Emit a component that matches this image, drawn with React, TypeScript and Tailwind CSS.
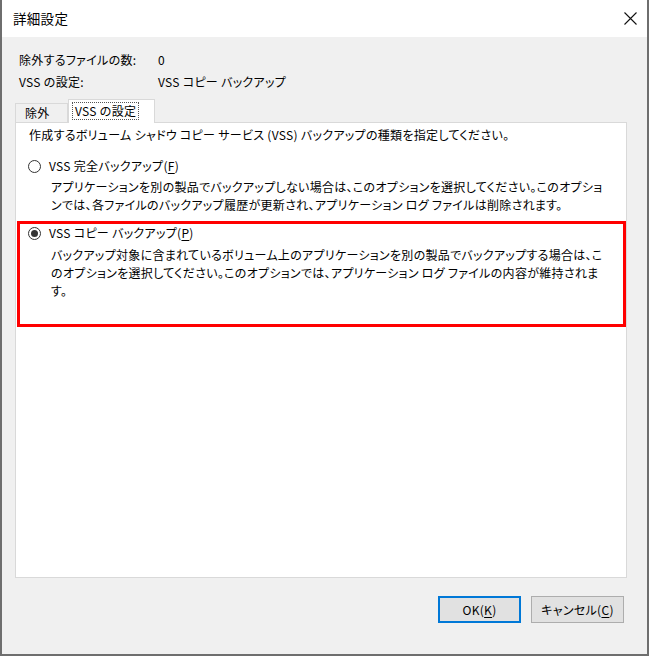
import React, { FC } from "react";

const Radio: FC<{ checked?: boolean }> = ({ checked }) => (
  <span className="flex h-[13px] w-[13px] shrink-0 items-center justify-center rounded-full border border-[#333333] bg-white">
    {checked ? <span className="h-[7px] w-[7px] rounded-full bg-[#333333]" /> : null}
  </span>
);

const Key: FC<{ k: string }> = ({ k }) => (
  <>
    (<span className="underline underline-offset-2">{k}</span>)
  </>
);

const App: FC = () => {
  return (
    <div
      className="flex h-[656px] w-[649px] flex-col border-x-2 border-b-2 border-[#6e6e6e] bg-[#f0f0f0] text-[12px] tracking-[0.3px] text-black [font-feature-settings:'palt']"
      style={{ fontFamily: '"Noto Sans CJK JP", "Noto Sans", sans-serif' }}
    >
      {/* title bar */}
      <div className="flex h-[37px] shrink-0 items-center justify-between bg-white pl-[11px] pr-[10px]">
        <span className="text-[13.5px]">詳細設定</span>
        <svg width="13" height="13" viewBox="0 0 13 13">
          <path d="M0.5 0.5 L12.5 12.5 M12.5 0.5 L0.5 12.5" stroke="#111" strokeWidth="1.1" />
        </svg>
      </div>

      {/* info rows */}
      <div className="flex flex-col pl-[17px] pt-[12px] leading-[22px]">
        <div className="flex">
          <span className="w-[139px]">除外するファイルの数:</span>
          <span>0</span>
        </div>
        <div className="flex">
          <span className="w-[139px]">VSS の設定:</span>
          <span>VSS コピー バックアップ</span>
        </div>
      </div>

      {/* tabs */}
      <div className="ml-[13px] mt-[6px] flex h-[23px] items-end">
        <div className="flex h-[19px] w-[53px] items-center border border-b-0 border-[#d9d9d9] pl-[9px] leading-none">
          除外
        </div>
        <div className="relative z-10 -mb-px flex h-[24px] w-[87px] items-start border border-b-0 border-[#d9d9d9] bg-white pl-[3px] pt-[2px]">
          <span className="border border-dotted border-[#555] px-[2px] leading-[16px]">VSS の設定</span>
        </div>
      </div>

      {/* panel */}
      <div className="ml-[13px] mr-[20px] h-[456px] border border-[#d9d9d9] bg-white">
        <div className="pl-[13px] pt-[3px] leading-[18px]">
          作成するボリューム シャドウ コピー サービス (VSS) バックアップの種類を指定してください。
        </div>

        <div className="mt-[13px] pl-[12px] leading-[18px]">
          <div className="flex items-center gap-[8px]">
            <Radio />
            <span>
              VSS 完全バックアップ<Key k="F" />
            </span>
          </div>
          <div className="mt-[3px] whitespace-nowrap pl-[23px]">
            <div>アプリケーションを別の製品でバックアップしない場合は、このオプションを選択してください。このオプショ</div>
            <div>ンでは、各ファイルのバックアップ履歴が更新され、アプリケーション ログ ファイルは削除されます。</div>
          </div>
        </div>

        <div className="ml-[1px] mt-[7px] h-[106px] border-[3px] border-[#ff0000] pl-[8px] leading-[18px]">
          <div className="flex items-center gap-[8px]">
            <Radio checked />
            <span>
              VSS コピー バックアップ<Key k="P" />
            </span>
          </div>
          <div className="mt-[4px] whitespace-nowrap pl-[23px]">
            <div>バックアップ対象に含まれているボリューム上のアプリケーションを別の製品でバックアップする場合は、こ</div>
            <div>のオプションを選択してください。このオプションでは、アプリケーション ログ ファイルの内容が維持されま</div>
            <div>す。</div>
          </div>
        </div>
      </div>

      {/* buttons */}
      <div className="mr-[23px] mt-[18px] flex justify-end gap-[10px]">
        <button className="flex h-[27px] w-[83px] items-center justify-center border-2 border-[#0078d7] bg-[#e1e1e1]">
          <span>
            OK<Key k="K" />
          </span>
        </button>
        <button className="flex h-[27px] w-[93px] items-center justify-center border border-[#adadad] bg-[#e1e1e1]">
          <span>
            キャンセル<Key k="C" />
          </span>
        </button>
      </div>
    </div>
  );
};

export default App;
